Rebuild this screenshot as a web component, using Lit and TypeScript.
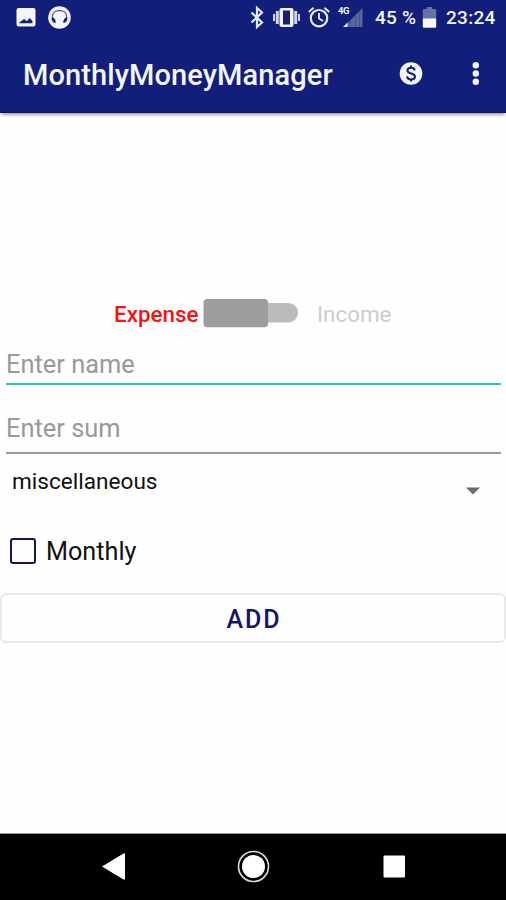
import { LitElement, html, css } from "lit";
import { customElement } from "lit/decorators.js";

@customElement("app-root")
export class AppRoot extends LitElement {
  static styles = css`
    :host { display: flex; flex-direction: column; width: 506px; height: 900px; overflow: hidden; background: #fefefe; font-family: Roboto, sans-serif; color: #111; box-sizing: border-box; }
    * { box-sizing: border-box; }
    svg { display: block; flex: none; }
    span { white-space: nowrap; }
    .status { height: 36px; flex: none; background: #111f7b; display: flex; align-items: center; color: #f3f4fc; font-size: 19px; font-weight: 500; }
    .status span { line-height: 38px; }
    .icons { width: 375px; flex: none; }
    .percent { width: 47px; letter-spacing: 0.2px; }
    .time { margin-left: 9px; letter-spacing: 0.3px; }
    .toolbar { height: 77px; flex: none; background: #111f7b; display: flex; align-items: flex-start; color: #f3f4fc; border-bottom: 1px solid #0b1163; box-shadow: 0 3px 3px -1px rgba(0,0,0,.35); }
    .title { width: 375px; padding-left: 23px; font-size: 29px; font-weight: 500; line-height: 79px; letter-spacing: 0.1px; }
    main { height: 720px; flex: none; display: flex; flex-direction: column; }
    .choice { margin-top: 184px; height: 34px; display: flex; align-items: center; font-size: 22.4px; }
    .expense { width: 203px; padding-left: 114px; font-weight: 500; color: #f81212; line-height: 36px; }
    .income { margin-left: 18px; color: #cdcdcd; line-height: 36px; }
    .field { margin: 0 5px 0 6px; color: #999; font-size: 25.4px; }
    .name { height: 54px; border-bottom: 2px solid #20cbb0; line-height: 66px; }
    .sum { height: 69px; border-bottom: 2px solid #999; line-height: 86px; }
    .select { height: 56px; padding: 0 26px 0 12px; display: flex; justify-content: space-between; font-size: 22.6px; line-height: 56px; }
    .select svg { margin-top: 33px; }
    .monthly { height: 83px; padding: 0 0 0 10px; display: flex; align-items: center; font-size: 25.2px; line-height: 83px; gap: 10px; }
    .box { width: 26px; height: 26px; border: 2px solid #14145f; border-radius: 3px; position: relative; top: -1px; }
    .add { height: 50px; border: 2px solid #e9e9e9; border-radius: 6px; background: #fefefe; color: #14146a; font: 500 25px/46px Roboto, sans-serif; letter-spacing: 2px; padding: 2px 0 0 2px; text-align: center; }
    nav { height: 67px; flex: none; background: #000; border-top: 1px solid #999; }
  `;

  render() {
    return html`
      <div class="status">
        <svg class="icons" width="375" height="36" viewBox="0 0 375 36" fill="#f3f4fc">
          <path fill-rule="evenodd" d="M18.500 8h15a2 2 0 0 1 2 2v14.500a2 2 0 0 1-2 2h-15a2 2 0 0 1-2-2V10a2 2 0 0 1 2-2zM19.300 23.300h13.200v-2l-2.700-3.300-3 3.300-2.600-2.300-4.900 3.500z"/>
          <circle cx="59.500" cy="17.500" r="11.300"/>
          <path d="M52.500 18v-1.500c0-3.800 3.200-6 7-6s7 2.200 7 6V18" fill="none" stroke="#5a649b" stroke-width="1.300"/>
          <path d="M51.500 17.500c2.600 0 4.300 1.900 4.300 5.300-2.400.4-4.300-1.700-4.300-5.300zM67.500 17.500c-2.600 0-4.300 1.900-4.300 5.300 2.400.4 4.300-1.700 4.300-5.300z" fill="#111f7b"/>
          <path d="M251.500 12.500L262 22.500l-5 4.500V8l5 4.500L251.500 22.500" fill="none" stroke="#e4e7f7" stroke-width="2.200"/>
          <path fill-rule="evenodd" d="M281.500 8h10a2 2 0 0 1 2 2v15a2 2 0 0 1-2 2h-10a2 2 0 0 1-2-2V10a2 2 0 0 1 2-2zM283 10.500v14h7v-14z"/>
          <path d="M275.800 11h3v13h-3zM294.200 11h3v13h-3zM273 14h2v7h-2zM298 14h2v7h-2z" fill="#cfd3ee"/>
          <circle cx="319" cy="18.200" r="8.200" fill="none" stroke="#e9ebf8" stroke-width="2.200"/>
          <path d="M319 13v5.500l4 2.500M308.800 12l4.800-4.200M329.200 12l-4.800-4.200" fill="none" stroke="#e9ebf8" stroke-width="1.900"/>
          <text x="338" y="14" font-size="9.500" font-weight="700" font-family="Roboto, sans-serif" letter-spacing="-.4">4G</text>
          <path d="M362.500 8v19h-19z" fill="#5b659f"/>
          <path d="M350.500 20v7M355.500 15v12M359.500 11v16" stroke="#46518f" stroke-width="1"/>
          <path d="M347.500 22.500v4.500h-4.500z" fill="#e4e7f7"/>
        </svg>
        <span class="percent">45 %</span>
        <svg width="15" height="36" viewBox="0 0 15 36">
          <path d="M5 7h5v2h3a1.200 1.200 0 0 1 1.200 1.200V19H.8v-8.800A1.200 1.200 0 0 1 2 9h3z" fill="#6871a8"/>
          <path d="M.8 18.500h13.400v8.300a1 1 0 0 1-1 1H1.800a1 1 0 0 1-1-1z" fill="#f7f7fd"/>
        </svg>
        <span class="time">23:24</span>
      </div>
      <header class="toolbar">
        <span class="title">MonthlyMoneyManager</span>
        <svg width="131" height="75" viewBox="375 36 131 75">
          <circle cx="411" cy="73.500" r="11.300" fill="#f5f6fd"/>
          <path d="M414.800 70.300c-.3-1.700-1.700-2.600-3.700-2.600-2.200 0-3.700 1.100-3.700 2.800 0 4 7.600 1.800 7.600 6 0 1.800-1.600 2.900-3.900 2.900s-3.900-1-4.100-3M411 65.500v2.500M411 79v2.600" fill="none" stroke="#111f7b" stroke-width="2"/>
          <g fill="#f5f6fd"><circle cx="475.800" cy="65.300" r="3.200"/><circle cx="475.800" cy="73.500" r="3.200"/><circle cx="475.800" cy="81.700" r="3.200"/></g>
        </svg>
      </header>
      <main>
        <div class="choice">
          <span class="expense">Expense</span>
          <svg width="96" height="34" viewBox="203 297 96 34">
            <rect x="240" y="303" width="58" height="19.500" rx="9.700" fill="#bbb"/>
            <rect x="203.500" y="299" width="64.500" height="28.300" rx="3.500" fill="#9d9d9d"/>
          </svg>
          <span class="income">Income</span>
        </div>
        <div class="field name">Enter name</div>
        <div class="field sum">Enter sum</div>
        <div class="select"><span>miscellaneous</span>
          <svg width="14" height="8" viewBox="0 0 14 8"><path d="M0 .5h14L7 7.500z" fill="#6c6c6c"/></svg>
        </div>
        <div class="monthly"><div class="box"></div><span>Monthly</span></div>
        <button class="add">ADD</button>
      </main>
      <nav>
        <svg width="506" height="66" viewBox="0 834 506 66" fill="#fff">
          <path d="M102 866.500L123.500 853.500q1.500-.6 1.500 1v24q0 1.600-1.500 1z"/>
          <circle cx="253.500" cy="866.500" r="15" fill="none" stroke="#ddd" stroke-width="1.600"/>
          <circle cx="253.500" cy="866.500" r="11.500"/>
          <rect x="383.500" y="855.500" width="21.500" height="22" rx="1"/>
        </svg>
      </nav>`;
  }
}
